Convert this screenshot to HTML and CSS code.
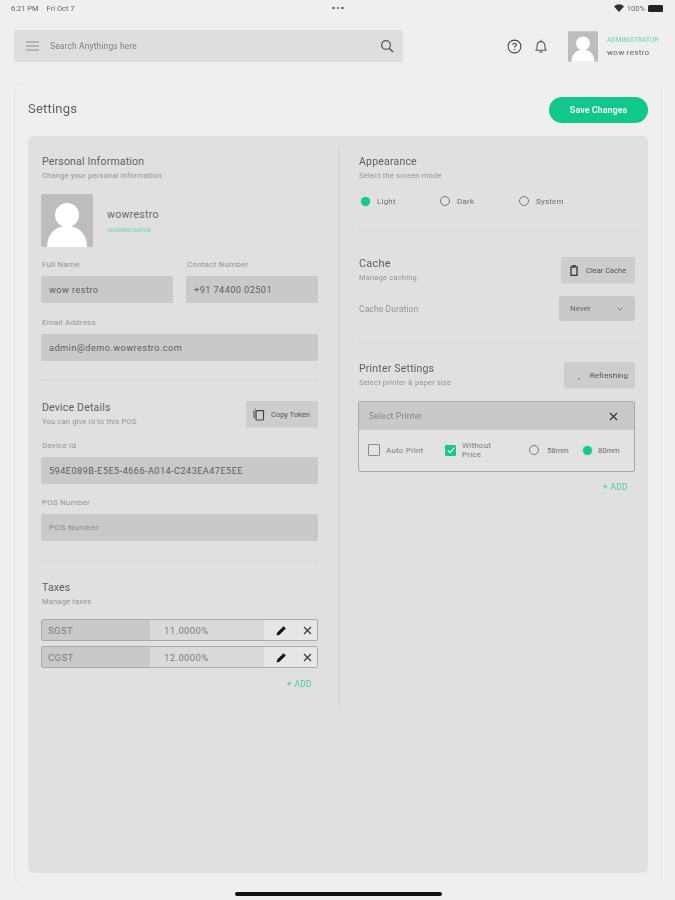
FILE: index.html
```html
<!DOCTYPE html>
<html lang="en">
<head>
<meta charset="utf-8">
<title>Settings</title>
<link rel="stylesheet" href="styles.css">
</head>
<body>
<div class="page">
  <div class="status">
    <span class="status-left"><span>6:21 PM</span><span>Fri Oct 7</span></span>
    <span class="status-dots"><i></i><i></i><i></i></span>
    <span class="status-right">
      <svg width="10" height="8" viewBox="0 0 10 8"><path d="M0 2.4C2.8-.4 7.2-.4 10 2.4L5 8z" fill="#333"/></svg>
      <span>100%</span>
      <span class="battery"></span>
    </span>
  </div>

  <header class="topbar">
    <div class="search">
      <svg class="menu-icon" width="13" height="10" viewBox="0 0 13 10"><path d="M0 1h13M0 5h13M0 9h13" stroke="#8a8a8a" stroke-width="1.2"/></svg>
      <span class="search-text">Search Anythings here</span>
      <svg class="search-icon" width="14" height="14" viewBox="0 0 14 14"><circle cx="6" cy="6" r="4.4" fill="none" stroke="#555" stroke-width="1.2"/><path d="M9.2 9.2L13 13" stroke="#555" stroke-width="1.4"/></svg>
    </div>
    <div class="top-actions">
      <svg width="15" height="15" viewBox="0 0 15 15"><circle cx="7.5" cy="7.5" r="6.4" fill="none" stroke="#444" stroke-width="1.1"/><path d="M5.8 6c0-2.2 3.5-2.2 3.5-.2 0 1.2-1.7 1.3-1.7 2.7" fill="none" stroke="#444" stroke-width="1.1"/><circle cx="7.6" cy="10.6" r=".7" fill="#444"/></svg>
      <svg width="14" height="15" viewBox="0 0 14 15"><path d="M2.2 11.2c1-1 .9-2.2.9-4.2 0-2.6 1.6-4.4 3.9-4.4s3.9 1.8 3.9 4.4c0 2 0 3.2.9 4.2z" fill="none" stroke="#555" stroke-width="1.1"/><path d="M5.5 13h3" stroke="#555" stroke-width="1.2"/><path d="M7 .8v1.6" stroke="#555"/></svg>
    </div>
    <div class="user">
      <svg class="avatar-small" viewBox="0 0 52 53"><rect width="52" height="53" fill="#bdbdbd"/><circle cx="26" cy="21" r="12" fill="#fff"/><path d="M6 53c0-13 8-21 20-21s20 8 20 21z" fill="#fff"/></svg>
      <div class="user-text">
        <div class="role">ADMINISTRATOR</div>
        <div class="user-name">wow restro</div>
      </div>
    </div>
  </header>

  <main class="card">
    <div class="card-head">
      <h1 class="page-title">Settings</h1>
      <button class="save">Save Changes</button>
    </div>
    <div class="panel">
      <section class="col col-left">
        <div class="heading personal">
          <h2>Personal Information</h2>
          <p>Change your personal information</p>
        </div>
        <div class="profile">
          <svg class="avatar" viewBox="0 0 52 53"><rect width="52" height="53" fill="#bdbdbd"/><circle cx="26" cy="21" r="12" fill="#fff"/><path d="M6 53c0-13 8-21 20-21s20 8 20 21z" fill="#fff"/></svg>
          <div>
            <div class="profile-name">wowrestro</div>
            <div class="role role-small">ADMINISTRATOR</div>
          </div>
        </div>
        <div class="two">
          <div>
            <label class="lbl">Full Name</label>
            <div class="input">wow restro</div>
          </div>
          <div>
            <label class="lbl">Contact Number</label>
            <div class="input">+91 74400 02501</div>
          </div>
        </div>
        <label class="lbl lbl-email">Email Address</label>
        <div class="input">admin@demo.wowrestro.com</div>
        <hr class="rule rule-a">

        <div class="head-row device-head">
          <div class="heading">
            <h2>Device Details</h2>
            <p>You can give id to this POS</p>
          </div>
          <button class="tool copy">
            <svg width="12" height="13" viewBox="0 0 12 13"><path d="M1 2.5V10M3 1h-1" fill="none" stroke="#444" stroke-width="1"/><rect x="3" y="2.6" width="7.5" height="9.4" rx=".8" fill="none" stroke="#444" stroke-width="1.2"/></svg>
            Copy Token
          </button>
        </div>
        <label class="lbl lbl-device">Device Id</label>
        <div class="input">594E089B-E5E5-4666-A014-C243EA47E5EE</div>
        <label class="lbl lbl-pos">POS Number</label>
        <div class="input placeholder">POS Number</div>
        <hr class="rule rule-b">

        <div class="heading taxes">
          <h2>Taxes</h2>
          <p>Manage taxes</p>
        </div>
        <div class="tax">
          <span class="tax-name">SGST</span>
          <span class="tax-val">11.0000%</span>
          <span class="tax-acts">
            <svg width="11" height="11" viewBox="0 0 11 11"><path d="M.5 10.5l.8-3L7.6 1.2l2.2 2.2-6.3 6.3z" fill="#111"/></svg>
            <svg width="9" height="9" viewBox="0 0 9 9"><path d="M1 1l7 7M8 1L1 8" stroke="#333" stroke-width="1.1"/></svg>
          </span>
        </div>
        <div class="tax tax-second">
          <span class="tax-name">CGST</span>
          <span class="tax-val">12.0000%</span>
          <span class="tax-acts">
            <svg width="11" height="11" viewBox="0 0 11 11"><path d="M.5 10.5l.8-3L7.6 1.2l2.2 2.2-6.3 6.3z" fill="#111"/></svg>
            <svg width="9" height="9" viewBox="0 0 9 9"><path d="M1 1l7 7M8 1L1 8" stroke="#333" stroke-width="1.1"/></svg>
          </span>
        </div>
        <div class="add add-tax">+ ADD</div>
      </section>

      <section class="col col-right">
        <div class="heading personal">
          <h2>Appearance</h2>
          <p>Select the screen mode</p>
        </div>
        <div class="modes">
          <span class="opt"><i class="radio on"></i>Light</span>
          <span class="opt"><i class="radio"></i>Dark</span>
          <span class="opt"><i class="radio"></i>System</span>
        </div>
        <hr class="rule rule-c">

        <div class="head-row cache-head">
          <div class="heading">
            <h2 class="big">Cache</h2>
            <p>Manage caching</p>
          </div>
          <button class="tool clear">
            <svg width="8" height="11" viewBox="0 0 8 11"><rect x="1" y="2" width="6" height="8.4" fill="none" stroke="#333" stroke-width="1.3"/><path d="M2 .7h4" stroke="#333" stroke-width="1.2"/></svg>
            Clear Cache
          </button>
        </div>
        <div class="head-row duration">
          <span class="lbl-inline">Cache Duration</span>
          <div class="select"><span>Never</span>
            <svg width="6" height="4" viewBox="0 0 6 4"><path d="M.5.5L3 3 5.500.5" fill="none" stroke="#777"/></svg>
          </div>
        </div>
        <hr class="rule rule-d">

        <div class="head-row printer-head">
          <div class="heading">
            <h2>Printer Settings</h2>
            <p>Select printer &amp; paper size</p>
          </div>
          <button class="tool refresh"><i class="dot"></i>Refreshing</button>
        </div>
        <div class="printer">
          <div class="printer-top">
            <span>Select Printer</span>
            <svg width="9" height="9" viewBox="0 0 9 9"><path d="M1 1l7 7M8 1L1 8" stroke="#333" stroke-width="1.2"/></svg>
          </div>
          <div class="printer-body">
            <span class="opt auto"><i class="check"></i>Auto Print</span>
            <span class="opt without"><i class="check on"><svg width="8" height="7" viewBox="0 0 8 7"><path d="M.8 3.500l2.200 2.200L7.200.8" fill="none" stroke="#fff" stroke-width="1.200"/></svg></i><span>Without<br>Price</span></span>
            <span class="opt mm58"><i class="radio"></i>58mm</span>
            <span class="opt mm80"><i class="radio on"></i>80mm</span>
          </div>
        </div>
        <div class="add add-printer">+ ADD</div>
      </section>
    </div>
  </main>
  <div class="home-bar"></div>
</div>
</body>
</html>
```

FILE: styles.css
```css
* { box-sizing: border-box; }
html, body { margin: 0; padding: 0; }
body {
  width: 675px;
  height: 900px;
  overflow: hidden;
  background: #efefef;
  font-family: "Roboto", "Liberation Sans", sans-serif;
  color: #555;
}
.page {
  height: 900px;
  display: flex;
  flex-direction: column;
  position: relative;
  filter: blur(0.6px);
}

/* status bar */
.status {
  height: 16px;
  padding: 0 10px 0 11px;
  display: flex;
  align-items: center;
  justify-content: space-between;
  font-size: 7.5px;
  color: #666;
}
.status-left { display: flex; gap: 8px; width: 200px; }
.status-dots { display: flex; gap: 2px; }
.status-dots i { width: 2.500px; height: 2.500px; border-radius: 50%; background: #666; }
.status-right { display: flex; align-items: center; gap: 3px; width: 200px; justify-content: flex-end; padding-right: 2px; }
.battery { width: 15px; height: 7px; background: #222; border-radius: 1.500px; }

/* top bar */
.topbar {
  height: 32px;
  margin: 14px 0 0 14px;
  display: flex;
  align-items: center;
}
.search {
  width: 389px;
  height: 32px;
  background: #dedede;
  border-radius: 2px;
  display: flex;
  align-items: center;
  padding: 0 9px 0 12px;
}
.menu-icon { flex: none; }
.search-text { margin-left: 11px; font-size: 8.500px; letter-spacing: .12px; color: #808080; flex: 1; }
.top-actions { display: flex; align-items: center; gap: 12px; margin-left: 104px; }
.user { display: flex; align-items: center; margin-left: 20px; }
.avatar-small { width: 30px; height: 31px; border-radius: 1px; display: block; }
.user-text { margin-left: 9px; }
.role { font-size: 6.500px; letter-spacing: .1px; color: #6bd3ad; }
.user-name { font-size: 8px; letter-spacing: .3px; color: #606060; margin-top: 4px; }

/* card */
.card {
  margin: 20px 13px 0 14px;
  height: 804px;
  border: 1px solid #e8e8e8;
  border-radius: 8px;
  padding: 0 13px 12px 13px;
  display: flex;
  flex-direction: column;
}
.card-head {
  height: 53px;
  display: flex;
  align-items: center;
  justify-content: space-between;
}
.page-title { margin: 0 0 3px; font-size: 13px; font-weight: 400; letter-spacing: .2px; color: #606060; }
.save {
  width: 99px;
  height: 26px;
  margin-top: 0;
  border: 0;
  border-radius: 13px;
  background: #12c78c;
  color: #e8f7f1;
  font: 700 9px "Roboto", sans-serif;
}
.panel {
  flex: 1;
  background: #e0e0e0;
  border-radius: 6px;
  display: flex;
  position: relative;
}
.panel::before {
  content: "";
  position: absolute;
  left: 310px;
  top: 14px;
  width: 1.500px;
  height: 558px;
  background: #d7d7d7;
}
.col { width: 310px; }
.col-left { padding: 0 20px 0 13px; }
.col-right { padding: 0 13px 0 20px; }

/* headings */
.heading h2 { margin: 0; font-size: 10.500px; line-height: 12px; font-weight: 400; letter-spacing: .2px; color: #606060; }
.heading h2.big { font-size: 11px; }
.heading p { margin: 3px 0 0; font-size: 7.500px; line-height: 9px; letter-spacing: .2px; color: #949494; }
.personal { padding: 20px 0 0 1px; }

.profile { display: flex; align-items: center; margin-top: 14px; }
.avatar { width: 52px; height: 53px; border-radius: 2px; display: block; flex: none; }
.profile-name { margin-left: 14px; font-size: 10.500px; letter-spacing: .3px; color: #6a6a6a; }
.role-small { margin: 6px 0 0 14px; font-size: 5.500px; }

.two { display: grid; grid-template-columns: 132px 132px; column-gap: 13px; margin-top: 11px; }
.lbl { display: block; height: 18px; line-height: 14px; padding-left: 1px; font-size: 8px; letter-spacing: .2px; color: #949494; }
.lbl-email { margin-top: 13px; }
.input {
  height: 27px;
  background: #c9c9c9;
  border-radius: 2px;
  padding-left: 8px;
  display: flex;
  align-items: center;
  font-size: 9.200px;
  letter-spacing: .42px;
  color: #5e5e5e;
}
.placeholder { color: #888; font-size: 8px; }
.rule { margin: 0; border: 0; height: 1px; background: #d5d5d5; }
.rule-a { margin-top: 19px; }
.head-row { display: flex; justify-content: space-between; align-items: center; }
.device-head { margin-top: 20px; padding-left: 1px; height: 26px; }
.tool {
  border: 0;
  background: #cdcdcd;
  border-radius: 2px;
  height: 26px;
  display: flex;
  align-items: center;
  font: 400 7.500px "Roboto", sans-serif;
  color: #555;
  box-shadow: 0 1px 1px rgba(0, 0, 0, .05);
}
.copy { width: 72px; padding: 0 0 0 7px; gap: 6px; }
.lbl-device { margin-top: 12px; }
.lbl-pos { margin-top: 12px; }
.rule-b { margin-top: 20px; }
.taxes { padding: 20px 0 0 1px; }
.tax {
  height: 22px;
  margin-top: 13px;
  border: 1.500px solid #a9a9a9;
  border-radius: 2px;
  display: grid;
  grid-template-columns: 108px 114px 1fr;
  align-items: stretch;
  font-size: 9.500px;
  letter-spacing: .4px;
}
.tax-second { margin-top: 5px; }
.tax-name { background: #c9c9c9; padding-left: 6px; display: flex; align-items: center; color: #7d7d7d; }
.tax-val { background: #dadada; padding-left: 14px; display: flex; align-items: center; color: #7d7d7d; }
.tax-acts { background: #e6e6e6; display: flex; align-items: center; gap: 16px; padding-left: 12px; }
.add { font-size: 8.500px; letter-spacing: .3px; color: #4dcca0; text-align: right; }
.add-tax { margin-top: 11px; padding-right: 6px; }

/* right column */
.modes { display: grid; grid-template-columns: 79px 79px 1fr; margin-top: 16px; padding-left: 3px; }
.opt { display: flex; align-items: center; font-size: 8px; letter-spacing: .2px; color: #6e6e6e; }
.radio {
  width: 10px;
  height: 10px;
  border-radius: 50%;
  border: 1px solid #777;
  margin-right: 7px;
  flex: none;
}
.radio.on { border: 0; background: #15c98d; box-shadow: 0 0 2px #7fe0bd; width: 9px; height: 9px; }
.rule-c { margin-top: 24px; }
.cache-head { margin-top: 26px; height: 26px; padding-left: 1px; }
.clear { width: 74px; padding: 0 0 0 9px; gap: 8px; }
.duration { margin-top: 13px; height: 25px; padding-left: 1px; }
.lbl-inline { font-size: 8.500px; letter-spacing: .1px; color: #949494; }
.select {
  width: 76px;
  height: 25px;
  background: #c9c9c9;
  border-radius: 2px;
  display: flex;
  align-items: center;
  justify-content: space-between;
  padding: 0 12px 0 11px;
  font-size: 8px;
  color: #666;
}
.rule-d { margin-top: 21px; }
.printer-head { margin-top: 19px; height: 26px; padding-left: 1px; }
.refresh { width: 71px; position: relative; justify-content: flex-end; padding-right: 7px; font-size: 8px; }
.dot { position: absolute; left: 14px; top: 16px; width: 2px; height: 2px; border-radius: 50%; background: #15c98d; }
.printer { margin-top: 13px; border: 1.500px solid #a9a9a9; border-radius: 2px; height: 71px; }
.printer-top {
  height: 28px;
  background: #c9c9c9;
  display: flex;
  align-items: center;
  justify-content: space-between;
  padding: 0 16px 0 10px;
  font-size: 8.500px;
  letter-spacing: .2px;
  color: #858585;
}
.printer-body { height: 40px; background: #e2e2e2; display: flex; align-items: center; padding-left: 9px; position: relative; }
.check {
  width: 12px;
  height: 12px;
  border: 1px solid #8a8a8a;
  border-radius: 1px;
  margin-right: 6px;
  flex: none;
  display: flex;
  align-items: center;
  justify-content: center;
}
.check.on { background: #15c98d; border-color: #15c98d; width: 11px; height: 11px; }
.auto { width: 77px; color: #7d7d7d; }
.without { width: 84px; line-height: 9px; color: #7d7d7d; }
.mm58 { width: 54px; font-size: 7.500px; letter-spacing: 0; }
.mm80 { font-size: 7.500px; letter-spacing: 0; }
.mm58 .radio { margin-right: 8px; }
.mm80 .radio { margin-right: 6px; }
.add-printer { margin-top: 10px; padding-right: 7px; }

.home-bar {
  position: absolute;
  left: 235px;
  top: 892px;
  width: 207px;
  height: 4px;
  background: #111;
  border-radius: 2px;
}
```
